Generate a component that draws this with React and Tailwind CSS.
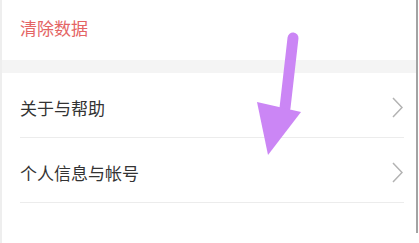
import React from "react";

const rows = ["关于与帮助", "个人信息与帐号"];

function Chevron() {
  return (
    <svg width="11" height="21" viewBox="0 0 11 21" fill="none">
      <polyline
        points="1,1 10,10.5 1,20"
        stroke="#b3b3b3"
        strokeWidth="1.5"
        strokeLinejoin="miter"
      />
    </svg>
  );
}

export default function App() {
  return (
    <div
      className="relative w-[419px] h-[243px] bg-white flex overflow-hidden"
      style={{ fontFamily: '"Noto Sans CJK SC", "Noto Sans", sans-serif' }}
    >
      <div className="w-[2px] bg-[#eeeeee]" />
      <div className="flex-1 flex flex-col">
        {/* clear data */}
        <div className="h-[60px] flex items-start pt-[16px] pl-[18px]">
          <span className="text-[17px] leading-[24px] text-[#e46464]">清除数据</span>
        </div>
        <div className="h-[13px] bg-[#f4f4f4]" />

        {rows.map((label) => (
          <div key={label} className="flex flex-col">
            <div className="h-[64px] flex items-center justify-between pl-[18px] pr-[13px] pt-[5px]">
              <span className="text-[17px] leading-[24px] text-[#333333]">{label}</span>
              <Chevron />
            </div>
            <div className="h-[1px] ml-[18px] mr-[12px] bg-[#ececec]" />
          </div>
        ))}
      </div>
      <div className="flex flex-col">
        <div className="w-[2px] h-[233px] bg-[#a3a3a3]" />
      </div>
      <div className="w-[1px]" />

      {/* annotation arrow */}
      <svg
        className="absolute inset-0 pointer-events-none"
        width="419"
        height="243"
        viewBox="0 0 419 243"
      >
        <line
          x1="293"
          y1="38"
          x2="285"
          y2="108"
          stroke="#cb86f5"
          strokeWidth="11"
          strokeLinecap="round"
        />
        <polygon points="257,102 301,112 268,155" fill="#cb86f5" />
      </svg>
    </div>
  );
}
